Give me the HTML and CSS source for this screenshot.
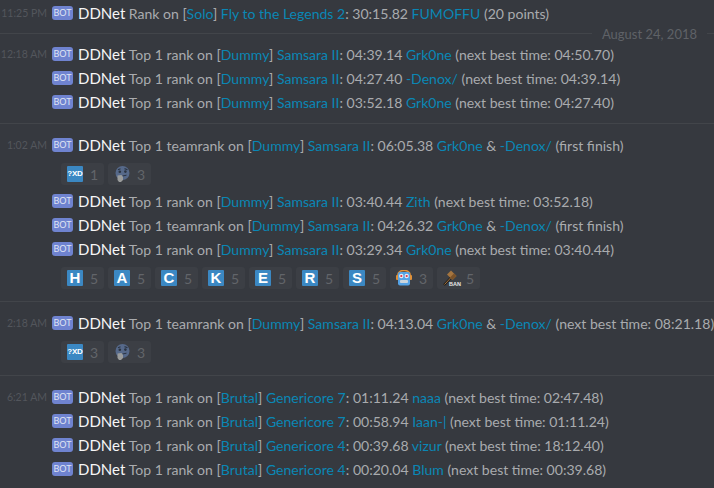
FILE: index.html
```html
<!DOCTYPE html>
<html lang="en">
<head>
    <meta charset="UTF-8">
    <meta name="viewport" content="width=device-width, initial-scale=1.0">
    <title>DDNet records</title>
    <link rel="stylesheet" href="styles.css">
</head>
<body>
    <svg class="defs" width="0" height="0">
        <symbol id="thinking" viewBox="0 0 16 16">
            <circle cx="8.500" cy="7" r="7" fill="#56698a"/>
            <path d="M4 3.800l2.500-1M10.500 2.600l3 1.200" stroke="#2b3442" stroke-width="1.200" fill="none"/>
            <circle cx="5.800" cy="5.800" r="1.300" fill="#2b3442"/>
            <circle cx="11.400" cy="5.600" r="1.300" fill="#2b3442"/>
            <path d="M8.500 10l4-.8" stroke="#2b3442" stroke-width="1"/>
            <path d="M3.500 9.500l4-.5 1.500 2v3l-2 2H5l-1.500-2z" fill="#9a9c9c"/>
        </symbol>
        <symbol id="robot" viewBox="0 0 16 16">
            <path d="M2 6V4a6 3.500 0 0 1 12 0v2" fill="none" stroke="#e0913a" stroke-width="1.500"/>
            <rect x="0" y="5" width="2.500" height="5" rx="1" fill="#e0913a"/>
            <rect x="13.500" y="5" width="2.500" height="5" rx="1" fill="#e0913a"/>
            <rect x="2" y="2" width="12" height="13.500" rx="2" fill="#55a3e6"/>
            <circle cx="5.300" cy="6" r="2.200" fill="#e6eef5"/>
            <circle cx="10.700" cy="6" r="2.200" fill="#e6eef5"/>
            <circle cx="5.300" cy="6" r="1.100" fill="#dd2e44"/>
            <circle cx="10.700" cy="6" r="1.100" fill="#dd2e44"/>
            <rect x="4" y="10" width="8" height="3" rx="1" fill="#ccd6dd"/>
        </symbol>
        <symbol id="hammer" viewBox="0 0 16 16">
            <path d="M1 15L8 7.500" stroke="#1f1a14" stroke-width="2.200"/>
            <path d="M1.500 14.500L8 7.500" stroke="#a5753f" stroke-width="1"/>
            <path d="M4 4.500L8 .5l5.500 5.500-4 4z" fill="#a5753f"/>
            <path d="M7 7.500l4-4 2.500 2.500-4 4z" fill="#7a5229"/>
        </symbol>
    </svg>

    <div class="chat">
        <div class="group first">
            <div class="line">
                <span class="time">11:25 PM</span><span class="bot">BOT</span><span class="name">DDNet</span>
                <span class="msg">Rank on [<a>Solo</a>] <a>Fly to the Legends 2</a>: 30:15.82 <a>FUMOFFU</a> (20 points)</span>
            </div>
        </div>

        <div class="date"><span>August 24, 2018</span></div>

        <div class="group">
            <div class="line">
                <span class="time">12:18 AM</span><span class="bot">BOT</span><span class="name">DDNet</span>
                <span class="msg">Top 1 rank on [<a>Dummy</a>] <a>Samsara II</a>: 04:39.14 <a>Grk0ne</a> (next best time: 04:50.70)</span>
            </div>
            <div class="line">
                <span class="time"></span><span class="bot">BOT</span><span class="name">DDNet</span>
                <span class="msg">Top 1 rank on [<a>Dummy</a>] <a>Samsara II</a>: 04:27.40 <a>-Denox/</a> (next best time: 04:39.14)</span>
            </div>
            <div class="line">
                <span class="time"></span><span class="bot">BOT</span><span class="name">DDNet</span>
                <span class="msg">Top 1 rank on [<a>Dummy</a>] <a>Samsara II</a>: 03:52.18 <a>Grk0ne</a> (next best time: 04:27.40)</span>
            </div>
        </div>

        <div class="group">
            <div class="line">
                <span class="time">1:02 AM</span><span class="bot">BOT</span><span class="name">DDNet</span>
                <span class="msg">Top 1 teamrank on [<a>Dummy</a>] <a>Samsara II</a>: 06:05.38 <a>Grk0ne</a> &amp; <a>-Denox/</a> (first finish)</span>
            </div>
            <div class="reactions">
                <div class="reaction"><span class="tile small">?XD</span><span class="count">1</span></div>
                <div class="reaction"><svg class="emoji"><use href="#thinking"/></svg><span class="count">3</span></div>
            </div>
            <div class="line">
                <span class="time"></span><span class="bot">BOT</span><span class="name">DDNet</span>
                <span class="msg">Top 1 rank on [<a>Dummy</a>] <a>Samsara II</a>: 03:40.44 <a>Zith</a> (next best time: 03:52.18)</span>
            </div>
            <div class="line">
                <span class="time"></span><span class="bot">BOT</span><span class="name">DDNet</span>
                <span class="msg">Top 1 teamrank on [<a>Dummy</a>] <a>Samsara II</a>: 04:26.32 <a>Grk0ne</a> &amp; <a>-Denox/</a> (first finish)</span>
            </div>
            <div class="line">
                <span class="time"></span><span class="bot">BOT</span><span class="name">DDNet</span>
                <span class="msg">Top 1 rank on [<a>Dummy</a>] <a>Samsara II</a>: 03:29.34 <a>Grk0ne</a> (next best time: 03:40.44)</span>
            </div>
            <div class="reactions">
                <div class="reaction"><span class="tile">H</span><span class="count">5</span></div>
                <div class="reaction"><span class="tile">A</span><span class="count">5</span></div>
                <div class="reaction"><span class="tile">C</span><span class="count">5</span></div>
                <div class="reaction"><span class="tile">K</span><span class="count">5</span></div>
                <div class="reaction"><span class="tile">E</span><span class="count">5</span></div>
                <div class="reaction"><span class="tile">R</span><span class="count">5</span></div>
                <div class="reaction"><span class="tile">S</span><span class="count">5</span></div>
                <div class="reaction"><svg class="emoji"><use href="#robot"/></svg><span class="count">3</span></div>
                <div class="reaction"><span class="ban"><svg class="emoji"><use href="#hammer"/></svg><b>BAN</b></span><span class="count">5</span></div>
            </div>
        </div>

        <div class="group">
            <div class="line">
                <span class="time">2:18 AM</span><span class="bot">BOT</span><span class="name">DDNet</span>
                <span class="msg">Top 1 teamrank on [<a>Dummy</a>] <a>Samsara II</a>: 04:13.04 <a>Grk0ne</a> &amp; <a>-Denox/</a> (next best time: 08:21.18)</span>
            </div>
            <div class="reactions">
                <div class="reaction"><span class="tile small">?XD</span><span class="count">3</span></div>
                <div class="reaction"><svg class="emoji"><use href="#thinking"/></svg><span class="count">3</span></div>
            </div>
        </div>

        <div class="group last">
            <div class="line">
                <span class="time">6:21 AM</span><span class="bot">BOT</span><span class="name">DDNet</span>
                <span class="msg">Top 1 rank on [<a>Brutal</a>] <a>Genericore 7</a>: 01:11.24 <a>naaa</a> (next best time: 02:47.48)</span>
            </div>
            <div class="line">
                <span class="time"></span><span class="bot">BOT</span><span class="name">DDNet</span>
                <span class="msg">Top 1 rank on [<a>Brutal</a>] <a>Genericore 7</a>: 00:58.94 <a>Iaan-|</a> (next best time: 01:11.24)</span>
            </div>
            <div class="line">
                <span class="time"></span><span class="bot">BOT</span><span class="name">DDNet</span>
                <span class="msg">Top 1 rank on [<a>Brutal</a>] <a>Genericore 4</a>: 00:39.68 <a>vizur</a> (next best time: 18:12.40)</span>
            </div>
            <div class="line">
                <span class="time"></span><span class="bot">BOT</span><span class="name">DDNet</span>
                <span class="msg">Top 1 rank on [<a>Brutal</a>] <a>Genericore 4</a>: 00:20.04 <a>Blum</a> (next best time: 00:39.68)</span>
            </div>
        </div>
    </div>
</body>
</html>
```

FILE: styles.css
```css
* {
    margin: 0;
    padding: 0;
    box-sizing: border-box;
}

html, body {
    height: 100%;
    overflow: hidden;
}

body {
    background-color: #36393f;
    font-family: Lato, 'Open Sans', sans-serif;
    color: #a9abae;
}

.defs {
    display: block;
    height: 0;
}

.chat {
    padding-top: 1px;
}

/* Message groups */
.group {
    padding: 9px 0 12px;
    border-bottom: 1px solid #42454a;
}

.group.first {
    padding: 0;
    border-bottom: none;
}

.group.last {
    border-bottom: none;
}

.date + .group {
    padding-top: 0;
    padding-bottom: 9px;
}

.line {
    display: flex;
    align-items: center;
    height: 24px;
    white-space: nowrap;
}

.time {
    width: 47px;
    margin-right: 5px;
    text-align: right;
    font-size: 10.5px;
    color: #53565c;
    flex-shrink: 0;
}

.bot {
    width: 21px;
    height: 14px;
    margin-right: 5px;
    margin-bottom: 1px;
    border-radius: 3px;
    background: #6f83d0;
    color: #dfe3f4;
    font-size: 9px;
    line-height: 14px;
    text-align: center;
    flex-shrink: 0;
}

.name {
    font-size: 15px;
    color: #f6f6f7;
    margin-right: 3.5px;
}

.msg {
    font-size: 14.05px;
}

.msg a {
    color: #0a87b5;
}

/* Date separator */
.date {
    display: flex;
    align-items: center;
    height: 17px;
    font-size: 13px;
    color: #5f6267;
}

.date::before,
.date::after {
    content: '';
    height: 1px;
    background: #42454a;
}

.date::before {
    flex: 1;
}

.date::after {
    width: 7px;
}

.date span {
    padding: 0 10px;
}

/* Reactions */
.reactions {
    display: flex;
    gap: 4px;
    margin: 6px 0 4px 61px;
}

.reactions:last-child {
    margin-bottom: 0;
}

.reaction {
    display: flex;
    align-items: center;
    width: 43px;
    height: 22px;
    padding-left: 6px;
    border-radius: 3px;
    background: #3c3f45;
}

.emoji {
    display: block;
    width: 16px;
    height: 16px;
    flex-shrink: 0;
}

.tile {
    width: 16px;
    height: 16px;
    border-radius: 1px;
    background: #3b88c3;
    color: #fff;
    font-family: 'Liberation Sans', sans-serif;
    font-size: 15px;
    font-weight: 700;
    line-height: 16px;
    text-align: center;
    white-space: nowrap;
    flex-shrink: 0;
}

.tile.small {
    font-size: 8px;
    letter-spacing: -.2px;
}

.ban {
    position: relative;
    width: 16px;
    height: 16px;
    flex-shrink: 0;
}

.ban b {
    position: absolute;
    right: -2px;
    bottom: -1px;
    font-family: 'Liberation Sans', sans-serif;
    font-size: 5.5px;
    color: #e8e8e8;
}

.count {
    margin-left: 7px;
    font-size: 14px;
    color: #62656a;
}
```
